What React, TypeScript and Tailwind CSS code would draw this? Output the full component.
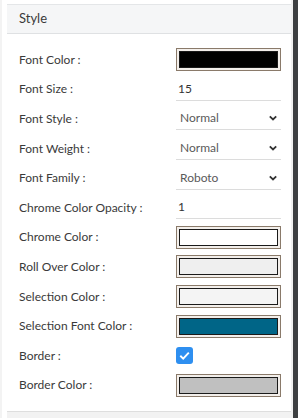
import React from 'react';

type Row =
  | { label: string; kind: 'color'; color: string }
  | { label: string; kind: 'text'; value: string }
  | { label: string; kind: 'select'; value: string }
  | { label: string; kind: 'check' };

const rows: Row[] = [
  { label: 'Font Color :', kind: 'color', color: '#000000' },
  { label: 'Font Size :', kind: 'text', value: '15' },
  { label: 'Font Style :', kind: 'select', value: 'Normal' },
  { label: 'Font Weight :', kind: 'select', value: 'Normal' },
  { label: 'Font Family :', kind: 'select', value: 'Roboto' },
  { label: 'Chrome Color Opacity :', kind: 'text', value: '1' },
  { label: 'Chrome Color :', kind: 'color', color: '#ffffff' },
  { label: 'Roll Over Color :', kind: 'color', color: '#efefef' },
  { label: 'Selection Color :', kind: 'color', color: '#f4f4f4' },
  { label: 'Selection Font Color :', kind: 'color', color: '#006587' },
  { label: 'Border :', kind: 'check' },
  { label: 'Border Color :', kind: 'color', color: '#c0c0c0' },
];

const Chevron = () => (
  <svg width="10" height="10" viewBox="0 0 10 10" className="text-[#333]">
    <path d="M1.8 3.4 L5 6.5 L8.2 3.4" fill="none" stroke="currentColor" strokeWidth="1.8" />
  </svg>
);

const Swatch = ({ color }: { color: string }) => (
  <div className="h-[23px] w-[105px] border border-[#8a7a6a] bg-[#f3efeb] p-[2px]">
    <div className="h-full w-full border border-[#1a1a1a]" style={{ backgroundColor: color }} />
  </div>
);

const Value = ({ row }: { row: Row }) => {
  if (row.kind === 'color') return <Swatch color={row.color} />;
  if (row.kind === 'check')
    return (
      <div className="flex h-[17px] w-[17px] items-center justify-center rounded-[3px] bg-[#2e8ff0]">
        <svg width="13" height="13" viewBox="0 0 13 13">
          <path d="M2.3 6.8 L5.2 9.6 L10.8 3.6" fill="none" stroke="#fff" strokeWidth="1.9" />
        </svg>
      </div>
    );
  if (row.kind === 'select')
    return (
      <div className="flex h-[23px] w-[105px] items-center justify-between border-b border-[#dcdcdc] pl-[4px] pr-[3px] text-[#5a5a5a]">
        <span>{row.value}</span>
        <Chevron />
      </div>
    );
  return (
    <div className="flex h-[23px] w-[105px] items-center border-b border-[#dcdcdc] pl-[2px] text-[#333]">
      {row.value}
    </div>
  );
};

export default function App() {
  return (
    <div className="flex h-[418px] w-[298px] bg-white font-['Lato','Open_Sans',sans-serif]">
      <div className="w-[7px] border-l-[2px] border-[#f3f3f3] bg-white" />
      <div className="flex flex-1 flex-col pt-[4px]">
        <div className="border-t border-[#e4e6e8] bg-white">
          <div className="flex h-[29px] items-center border-b border-[#dfe1e3] bg-[#f5f6f7] pl-[12px] text-[13px] text-[#3a3a3a]">
            Style
          </div>
          <div className="flex flex-col pb-[11px] pl-[12px] pt-[11px]">
            {rows.map((r) => (
              <div key={r.label} className="flex h-[29.6px] items-center text-[12px] text-[#3a3a3a]">
                <span className="w-[157px]">{r.label}</span>
                <Value row={r} />
              </div>
            ))}
          </div>
        </div>
        <div className="flex-1 border-t border-[#dedede] bg-[#f2f2f2]" />
      </div>
      <div className="w-[2px] bg-[#f0f0f0]" />
      <div className="w-[5px] bg-[#3d3f41]" />
    </div>
  );
}
